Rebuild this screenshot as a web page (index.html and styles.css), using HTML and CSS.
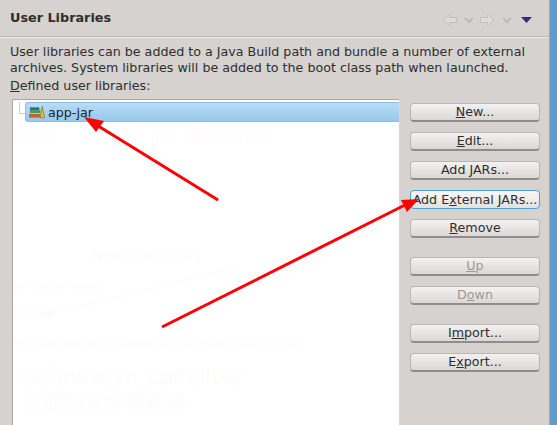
FILE: index.html
```html
<!DOCTYPE html>
<html lang="en">
<head>
    <meta charset="UTF-8">
    <title>User Libraries</title>
    <link rel="stylesheet" href="styles.css">
</head>
<body>
<div class="window">
    <div class="panel">
        <div class="header">
            <h2 class="title">User Libraries</h2>
            <div class="nav">
                <svg width="92" height="14" viewBox="0 0 92 14">
                    <path d="M1 7 L7.5 1.5 V4.5 H14.5 V9.5 H7.5 V12.5 Z" fill="#dedbd8" stroke="#c3bfbc"/>
                    <path d="M23 5 L27 9 L31 5" fill="none" stroke="#b5b1ae" stroke-width="1.3"/>
                    <path d="M52 7 L45.5 1.5 V4.5 H38.5 V9.5 H45.5 V12.5 Z" fill="#dedbd8" stroke="#c3bfbc"/>
                    <path d="M61 5 L65 9 L69 5" fill="none" stroke="#b5b1ae" stroke-width="1.3"/>
                    <path d="M79 4 H90 L84.5 10 Z" fill="#3c2a78"/>
                </svg>
            </div>
        </div>
        <div class="content">
            <p class="desc">User libraries can be added to a Java Build path and bundle a number of external<br>archives. System libraries will be added to the boot class path when launched.</p>
            <p class="label"><u>D</u>efined user libraries:</p>
            <div class="columns">
                <div class="tree">
                    <div class="tree-row">
                        <span class="branch"></span>
                        <div class="selected">
                            <svg class="lib-icon" width="16" height="15" viewBox="0 0 17 15">
                                <rect x="1" y="2" width="10" height="3" fill="#2f6f8f"/>
                                <rect x="1" y="5" width="11" height="3" fill="#3f9a5a"/>
                                <rect x="0" y="9" width="12" height="4" fill="#c0662c"/>
                                <path d="M12 13 L14 1 L16.5 13 Z" fill="#f0c23a" stroke="#8a6a1c" stroke-width=".7"/>
                            </svg>
                            <span>app-jar</span>
                        </div>
                    </div>
                    <div class="ghost">
                        <p class="ghost-files"><span>01.png</span><span>[2] - 选区_002.png</span></p>
                        <p class="ghost-dialog">New User Library</p>
                        <p class="ghost-name">er library name:</p>
                        <p class="ghost-value">p-jar</p>
                        <p class="ghost-check">System library (added to the boot class path)</p>
                        <p class="ghost-note">以为new_rh_cpm/libs/<br>下面的文件夹命名</p>
                    </div>
                </div>
                <div class="buttons">
                    <button type="button"><u>N</u>ew...</button>
                    <button type="button"><u>E</u>dit...</button>
                    <button type="button">Add JARs...</button>
                    <button type="button" class="focused">Add E<u>x</u>ternal JARs...</button>
                    <button type="button"><u>R</u>emove</button>
                    <button type="button" class="disabled group-start"><u>U</u>p</button>
                    <button type="button" class="disabled">D<u>o</u>wn</button>
                    <button type="button" class="group-start">I<u>m</u>port...</button>
                    <button type="button">E<u>x</u>port...</button>
                </div>
            </div>
        </div>
    </div>
    <div class="strip"></div>

    <!-- red annotation arrows drawn over the screenshot -->
    <svg class="arrows" width="557" height="425" viewBox="0 0 557 425">
        <path d="M235 268 L58 312 M41 314 L52 309 L52 317 Z" stroke="#fefafa" stroke-width="1.5" fill="#fefafa"/>
        <path d="M218 200 L95 124" stroke="#ff0000" stroke-width="3" fill="none"/>
        <path d="M84 117 L104 121 L96 132 Z" fill="#ff0000"/>
        <path d="M162 327 L405 205" stroke="#ff0000" stroke-width="3" fill="none"/>
        <path d="M419 199 L407 212 L401 200 Z" fill="#ff0000"/>
    </svg>
</div>
</body>
</html>
```

FILE: styles.css
```css
html, body {
    margin: 0;
    height: 100%;
    overflow: hidden;
}

body {
    font-family: "DejaVu Sans", sans-serif;
    font-size: 12.66px;
    color: #2e2e2e;
    background: #d6d2cf;
}

.window {
    position: relative;
    display: flex;
    width: 557px;
    height: 425px;
    overflow: hidden;
}

.panel {
    width: 549px;
    border-right: 1px solid #a9a7a5;
    box-sizing: content-box;
    overflow: hidden;
}

.strip {
    flex: 1;
    background: #5f9ccb;
}

.header {
    display: flex;
    align-items: center;
    justify-content: space-between;
    height: 38px;
    padding: 0 15px 0 10px;
    border-bottom: 1px solid #eceae8;
    box-shadow: 0 -1px 0 #bdb9b6 inset;
    box-sizing: border-box;
}

.title {
    margin: 0 0 2px;
    font-size: 12.8px;
    font-weight: bold;
    color: #2e2e2e;
}

.nav {
    display: flex;
    margin-top: 2px;
}

.content {
    padding: 6px 9px 0 10px;
}

.desc {
    margin: 0;
    line-height: 15.5px;
}

.label {
    margin: 3px 0 0;
    line-height: 16px;
}

.columns {
    display: flex;
    align-items: flex-start;
    margin-top: 5px;
    margin-left: 2px;
}

.tree {
    width: 388px;
    height: 340px;
    padding: 2px 0 0 0;
    box-sizing: border-box;
    background: #fff;
    border: 1px solid #a9a7a5;
    border-right-color: #d8d6d4;
    border-radius: 2px;
    overflow: hidden;
}

.tree-row {
    display: flex;
}

.branch {
    width: 7px;
    height: 11px;
    margin-left: 6px;
    border-left: 1px solid #cfcdcb;
    border-bottom: 1px solid #cfcdcb;
    flex: none;
}

.selected {
    display: flex;
    align-items: center;
    gap: 3px;
    flex: 1;
    height: 20px;
    margin-left: -2px;
    padding-left: 3px;
    background: linear-gradient(#b8dcf5, #97c8ec);
    border-radius: 3px 0 0 3px;
    border: 1px solid #8dbde0;
    border-right: none;
    box-sizing: border-box;
    color: #222;
}

.lib-icon {
    flex: none;
}

.ghost {
    color: #fefbfa;
}

.ghost p {
    margin: 0;
    white-space: nowrap;
}

.ghost-files {
    display: flex;
    gap: 98px;
    padding: 7px 0 0 0;
}

.ghost-dialog {
    padding: 102px 0 0 80px;
}

.ghost-name {
    padding: 17px 0 0;
    font-size: 11.2px;
}

.ghost-value {
    padding: 12px 0 0;
}

.ghost-check {
    padding: 16px 0 0;
}

.ghost-note {
    padding: 14px 0 0 9px;
    font-family: "DejaVu Sans", "Noto Sans CJK SC", sans-serif;
    font-size: 20.7px;
    line-height: 25px;
}

.buttons {
    display: flex;
    flex-direction: column;
    gap: 10px;
    width: 130px;
    margin-left: 10px;
    margin-top: 4px;
}

.buttons button {
    height: 19px;
    padding: 0;
    font-family: "DejaVu Sans", sans-serif;
    font-size: 12.66px;
    line-height: 16px;
    color: #2e2e2e;
    background: linear-gradient(#f3f2f1, #dad7d5);
    border: 1px solid #b9b6b3;
    border-bottom: 2px solid #8f8c8a;
    border-radius: 4px;
    white-space: nowrap;
}

.buttons .focused {
    border: 1px solid #4a9fdc;
    background: linear-gradient(#f8f8f7, #e4e2e0);
}

.buttons .disabled {
    color: #9a9896;
}

.buttons .group-start {
    margin-top: 9px;
}

.arrows {
    position: absolute;
    left: 0;
    top: 0;
    pointer-events: none;
}
```
